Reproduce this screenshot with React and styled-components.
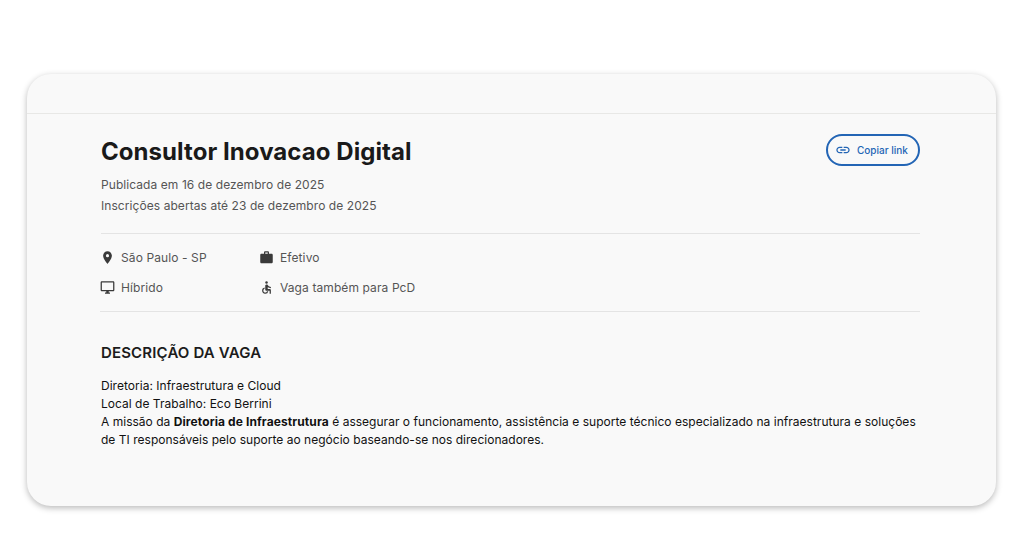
import styled, { createGlobalStyle } from "styled-components";
import { MdPlace, MdWork, MdOutlineDesktopWindows, MdAccessible, MdLink } from "react-icons/md";

const GlobalStyle = createGlobalStyle`
  html, body {
    margin: 0;
    padding: 0;
    background: #fff;
    font-family: "Inter", "Liberation Sans", sans-serif;
  }
`;

const Page = styled.div`
  height: 536px;
  padding: 74px 28px 30px 27px;
  box-sizing: border-box;
  overflow: hidden;
`;

const Card = styled.section`
  height: 432px;
  box-sizing: border-box;
  background: #f9f9f9;
  border-radius: 24px;
  box-shadow: 0 2px 6px rgba(0, 0, 0, 0.28);
`;

const TopBar = styled.div`
  height: 39px;
  border-bottom: 1px solid #e8e8e6;
`;

const Content = styled.div`
  padding: 20px 76px 0 74px;
`;

const Header = styled.div`
  display: flex;
  justify-content: space-between;
  align-items: flex-start;
`;

const Title = styled.h1`
  margin: 0;
  font-size: 24px;
  line-height: 36px;
  font-weight: 700;
  letter-spacing: 0.06px;
  color: #1a1a1a;
`;

const CopyButton = styled.button`
  display: flex;
  align-items: center;
  gap: 6px;
  width: 94px;
  height: 32px;
  padding: 0 0 0 7px;
  box-sizing: border-box;
  background: transparent;
  border: 2px solid #2365b5;
  border-radius: 16px;
  color: #2365b5;
  font-family: inherit;
  font-size: 10px;
  font-weight: 500;
`;

const Dates = styled.div`
  margin-top: 4px;
  padding-bottom: 17px;
  border-bottom: 1px solid #e4e4e4;
`;

const DateLine = styled.p`
  margin: 0;
  font-size: 12px;
  line-height: 21px;
  letter-spacing: 0.07px;
  color: #555;
`;

const Facts = styled.div`
  display: grid;
  grid-template-columns: 159px 1fr;
  grid-auto-rows: 30px;
  padding: 8px 0 9px;
  margin-left: -1px;
  border-bottom: 1px solid #e4e4e4;
`;

const Fact = styled.div`
  display: flex;
  align-items: center;
  gap: 6px;
  font-size: 12px;
  letter-spacing: 0.1px;
  color: #555;

  svg {
    flex: none;
    color: #3a3a3a;
  }
`;

const SectionTitle = styled.h2`
  margin: 31px 0 0;
  font-size: 15px;
  line-height: 20px;
  font-weight: 600;
  letter-spacing: 0.15px;
  color: #1c1c1c;
`;

const Description = styled.div`
  margin-top: 14px;
  font-size: 12px;
  line-height: 18px;
  letter-spacing: 0.02px;
  color: #111;

  p {
    margin: 0;
  }

  strong {
    letter-spacing: 0.1px;
  }
`;

export default function App() {
  return (
    <Page>
      <GlobalStyle />
      <Card>
        <TopBar />
        <Content>
          <Header>
            <Title>Consultor Inovacao Digital</Title>
            <CopyButton>
              <MdLink size={16} />
              Copiar link
            </CopyButton>
          </Header>
          <Dates>
            <DateLine>Publicada em 16 de dezembro de 2025</DateLine>
            <DateLine>Inscrições abertas até 23 de dezembro de 2025</DateLine>
          </Dates>
          <Facts>
            <Fact><MdPlace size={15} />São Paulo - SP</Fact>
            <Fact><MdWork size={15} />Efetivo</Fact>
            <Fact><MdOutlineDesktopWindows size={15} />Híbrido</Fact>
            <Fact><MdAccessible size={15} />Vaga também para PcD</Fact>
          </Facts>
          <SectionTitle>DESCRIÇÃO DA VAGA</SectionTitle>
          <Description>
            <p>Diretoria: Infraestrutura e Cloud</p>
            <p>Local de Trabalho: Eco Berrini</p>
            <p>
              A missão da <strong>Diretoria de Infraestrutura</strong> é assegurar o funcionamento, assistência e suporte técnico especializado na infraestrutura e soluções de TI responsáveis pelo suporte ao negócio baseando-se nos direcionadores.
            </p>
          </Description>
        </Content>
      </Card>
    </Page>
  );
}
